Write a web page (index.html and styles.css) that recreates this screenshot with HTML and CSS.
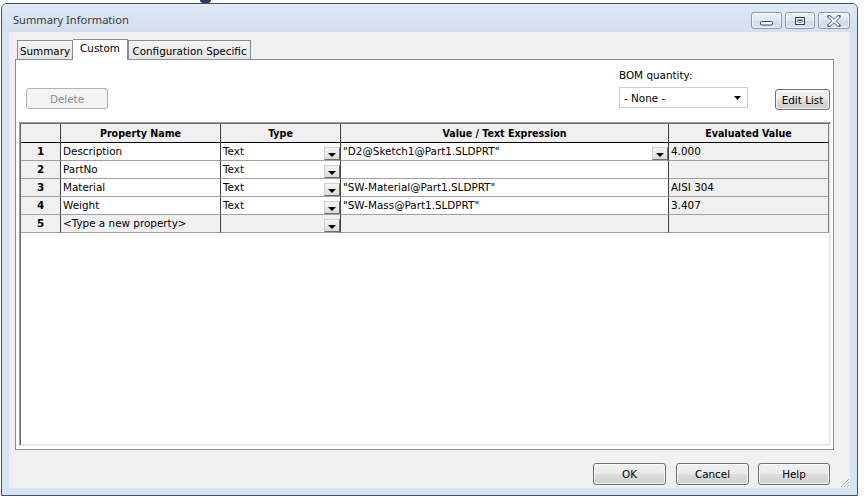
FILE: index.html
```html
<!DOCTYPE html>
<html>
<head>
<meta charset="utf-8">
<title>Summary Information</title>
<link rel="stylesheet" href="styles.css">
</head>
<body>
<div class="behind"></div>
<div class="window">
  <div class="titlebar">
    <span class="title">Summary Information</span>
    <div class="caption-btns">
      <div class="cap cap-min"><svg width="15" height="6" viewBox="0 0 15 6"><rect x="1.5" y="1.5" width="12" height="3.5" rx="1" fill="#fff" stroke="#3a4250"/></svg></div>
      <div class="cap cap-max"><svg width="12" height="10" viewBox="0 0 12 10"><rect x="1.5" y="1.5" width="9" height="7" fill="#fff" stroke="#3a4250"/><rect x="3.5" y="3.5" width="5" height="3" fill="#3a4250"/><rect x="4" y="5" width="4" height="1" fill="#fff"/></svg></div>
      <div class="cap cap-close"><svg width="16" height="12" viewBox="0 0 16 12"><path d="M3 1.5 L13 10.5 M13 1.5 L3 10.5" stroke="#5d6472" stroke-width="3.6" stroke-linecap="round" fill="none"/><path d="M3.5 2 L12.5 10 M12.5 2 L3.5 10" stroke="#fff" stroke-width="1.8" stroke-linecap="round" fill="none"/></svg></div>
    </div>
  </div>
  <div class="frame">
    <div class="client">
      <div class="tabs">
        <div class="tab">Summary</div>
        <div class="tab active">Custom</div>
        <div class="tab">Configuration Specific</div>
      </div>
      <div class="panel">
        <div class="toolbar">
          <div class="btn btn-delete">Delete</div>
          <div class="bom">
            <div class="bom-label">BOM quantity:</div>
            <div class="select"><span>- None -</span><svg width="8" height="5" viewBox="0 0 8 5"><path d="M0 0 H7 L3.5 4 Z" fill="#000"/></svg></div>
          </div>
          <div class="btn btn-edit">Edit List</div>
        </div>
        <div class="gridbox">
          <div class="grid">
            <div class="c hd num"></div>
            <div class="c hd">Property Name</div>
            <div class="c hd">Type</div>
            <div class="c hd">Value / Text Expression</div>
            <div class="c hd last">Evaluated Value</div>

            <div class="c num">1</div>
            <div class="c">Description</div>
            <div class="c dd"><span>Text</span><div class="ddbtn"></div></div>
            <div class="c dd"><span>"D2@Sketch1@Part1.SLDPRT"</span><div class="ddbtn"></div></div>
            <div class="c ev last">4.000</div>

            <div class="c num">2</div>
            <div class="c">PartNo</div>
            <div class="c dd"><span>Text</span><div class="ddbtn"></div></div>
            <div class="c"></div>
            <div class="c ev last"></div>

            <div class="c num">3</div>
            <div class="c">Material</div>
            <div class="c dd"><span>Text</span><div class="ddbtn"></div></div>
            <div class="c">"SW-Material@Part1.SLDPRT"</div>
            <div class="c ev last">AISI 304</div>

            <div class="c num">4</div>
            <div class="c">Weight</div>
            <div class="c dd"><span>Text</span><div class="ddbtn"></div></div>
            <div class="c">"SW-Mass@Part1.SLDPRT"</div>
            <div class="c ev last">3.407</div>

            <div class="c num">5</div>
            <div class="c gray">&lt;Type a new property&gt;</div>
            <div class="c dd gray"><span></span><div class="ddbtn"></div></div>
            <div class="c gray"></div>
            <div class="c ev last"></div>
          </div>
        </div>
      </div>
      <div class="footer">
        <div class="btn btn-ok">OK</div>
        <div class="btn btn-cancel">Cancel</div>
        <div class="btn btn-help">Help</div>
        <svg class="grip" width="10" height="10" viewBox="0 0 10 10"><path d="M9 1 L1 9 M9 4 L4 9 M9 7 L7 9" stroke="#a9b2bd" stroke-width="1"/></svg>
      </div>
    </div>
  </div>
</div>
</body>
</html>
```
FILE: styles.css
```css
* { box-sizing: border-box; }

body {
  margin: 0;
  width: 868px;
  height: 504px;
  overflow: hidden;
  background: #ffffff;
  font-family: "DejaVu Sans", Tahoma, sans-serif;
  font-size: 10.4px;
  color: #000;
  position: relative;
}

.behind {
  position: absolute;
  left: 200px;
  top: 0;
  width: 11px;
  height: 3px;
  background: #2b3a66;
  border-radius: 0 0 3px 3px;
}

.window {
  margin: 3px 0 0 1px;
  width: 857px;
  height: 493px;
  border: 1px solid #4a4f5a;
  border-radius: 6px 6px 0 0;
  background: #d6e3f2;
  display: flex;
  flex-direction: column;
}

.titlebar {
  height: 28px;
  display: flex;
  align-items: flex-start;
  justify-content: space-between;
  padding: 0 7px 0 11px;
  background: linear-gradient(#dfe8f4, #d4e0ef);
  border-radius: 5px 5px 0 0;
}

.title {
  font-family: "Noto Sans", "Open Sans", sans-serif;
  font-size: 11.1px;
  line-height: 18px;
  padding-top: 7px;
  color: #3b3b3b;
}

.caption-btns {
  display: flex;
  margin-top: 8px;
  gap: 3px;
}

.cap {
  height: 17px;
  border: 1px solid #8d9aae;
  border-radius: 3px;
  background: linear-gradient(#eef3fa, #dde6f2 50%, #cfdbea 51%, #d8e3f0);
  display: flex;
  align-items: center;
  justify-content: center;
  box-shadow: inset 0 0 0 1px rgba(255,255,255,0.6);
}
.cap-min { width: 31px; align-items: flex-end; padding-bottom: 2px; }
.cap-max { width: 30px; }
.cap-close { width: 32px; }

.frame {
  flex: 1;
  padding: 0 7px 7px 7px;
  display: flex;
}

.client {
  flex: 1;
  background: #f0f0f0;
  display: flex;
  flex-direction: column;
  padding: 7px 0 3px 6px;
  position: relative;
}

.tabs {
  display: flex;
  height: 20px;
  margin-left: 2px;
  align-items: flex-end;
  position: relative;
  z-index: 1;
}

.tab {
  height: 19px;
  border: 1px solid #898c95;
  border-bottom: none;
  background: linear-gradient(#f3f3f3, #e5e5e5);
  padding-top: 4px;
  text-align: center;
  line-height: 13px;
  color: #000;
}
.tab:nth-child(1) { width: 56px; }
.tab:nth-child(2) { width: 55px; }
.tab:nth-child(3) { width: 123px; }
.tab.active {
  height: 21px;
  margin-bottom: -1px;
  background: #ffffff;
  padding-top: 2px;
  border-left: 1px solid #898c95;
}
.tab + .tab { border-left: none; }
.tab.active + .tab { border-left: 1px solid #898c95; }

.panel {
  width: 819px;
  height: 391px;
  border: 1px solid #898c95;
  background: #ffffff;
  display: flex;
  flex-direction: column;
}

.toolbar {
  height: 62px;
  display: flex;
  align-items: flex-start;
  padding: 0 3px 0 10px;
}

.btn {
  border: 1px solid #707070;
  border-radius: 3px;
  background: linear-gradient(#f2f2f2, #ebebeb 48%, #dddddd 52%, #cfcfcf);
  display: flex;
  align-items: center;
  justify-content: center;
  color: #000;
  box-shadow: inset 0 0 0 1px rgba(255,255,255,0.7);
}

.btn-delete {
  width: 82px;
  height: 21px;
  margin-top: 28px;
  border-color: #adb2b5;
  background: #f4f4f4;
  color: #8a8a8a;
  box-shadow: none;
}

.bom {
  margin-left: auto;
  display: flex;
  flex-direction: column;
}
.bom-label {
  margin-top: 8px;
  line-height: 14px;
  height: 14px;
}
.select {
  margin-top: 5px;
  width: 129px;
  height: 21px;
  border: 1px solid #d0d0d0;
  background: #fff;
  display: flex;
  align-items: center;
  justify-content: space-between;
  padding: 0 5px 0 4px;
}
.select svg { margin-top: 1px; }

.btn-edit {
  width: 55px;
  height: 21px;
  margin-left: 27px;
  margin-top: 29px;
}

.gridbox {
  height: 324px;
  margin: 0 2px 3px 3px;
  border: 1px solid;
  border-color: #a0a0a0 #f0f0f0 #f0f0f0 #a0a0a0;
  padding: 1px;
  box-shadow: inset 1px 1px 0 #696969, inset -1px -1px 0 #e3e3e3;
  background: #fff;
}

.grid {
  display: grid;
  grid-template-columns: 40px 160px 120px 328px 160px;
  grid-auto-rows: 18px;
  grid-template-rows: 19px;
  width: 808px;
}

.c {
  border-right: 1px solid #404040;
  border-bottom: 1px solid #a0a0a0;
  padding-left: 2px;
  line-height: 17px;
  white-space: nowrap;
  overflow: hidden;
  background: #fff;
}
.c.last { border-right-color: #808080; }

.c.hd {
  background: #f0f0f0;
  font-family: "DejaVu Sans Condensed", "DejaVu Sans", sans-serif;
  font-weight: bold;
  font-size: 10.6px;
  text-align: center;
  border-bottom: 1px solid #000;
  line-height: 19px;
  padding-left: 0;
}

.c.num {
  background: #f0f0f0;
  font-weight: bold;
  text-align: center;
  padding-left: 0;
  font-size: 10.4px;
}

.c.ev, .c.gray { background: #f0f0f0; }

.c.dd {
  display: flex;
  justify-content: space-between;
  padding-right: 0;
}

.ddbtn {
  width: 16px;
  height: 13px;
  align-self: flex-end;
  border: 1px solid;
  border-color: #cfcfcf #707070 #707070 #cfcfcf;
  background: linear-gradient(#f4f4f4, #dcdcdc);
  position: relative;
}
.ddbtn::after {
  content: "";
  position: absolute;
  left: 3px;
  top: 5px;
  border-left: 4px solid transparent;
  border-right: 4px solid transparent;
  border-top: 4px solid #000;
}

.footer {
  display: flex;
  padding-top: 13px;
  margin-right: 20px;
  justify-content: flex-end;
  align-items: flex-start;
}
.btn-ok, .btn-cancel { width: 73px; height: 22px; }
.btn-help { width: 72px; height: 22px; }
.btn-ok { margin-right: 10px; }
.btn-cancel { margin-right: 9px; }

.grip {
  position: absolute;
  right: 0;
  bottom: 0;
}
```
